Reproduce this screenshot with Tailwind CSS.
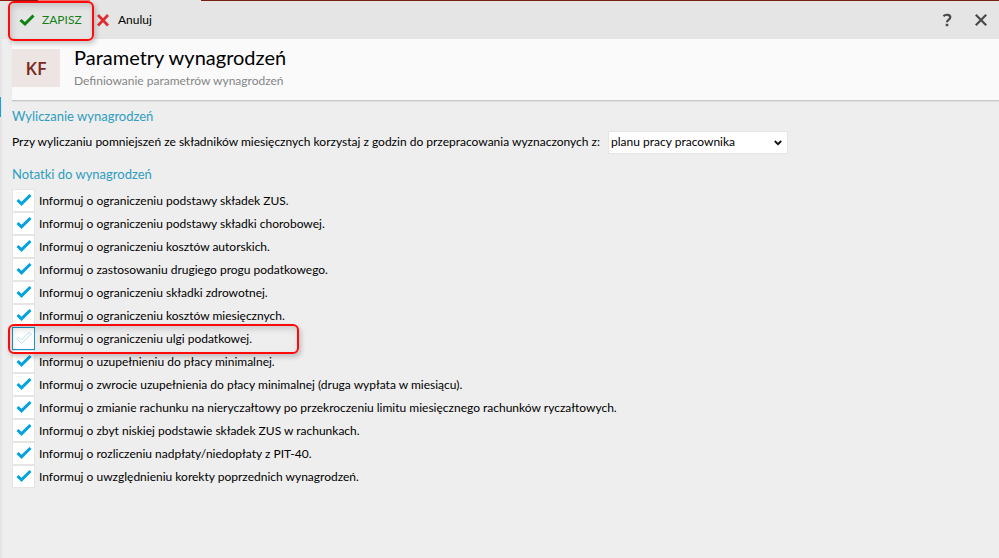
<!DOCTYPE html>
<html lang="pl">
<head>
<meta charset="utf-8">
<meta name="viewport" content="width=device-width, initial-scale=1">
<title>Parametry wynagrodzeń</title>
<script src="https://cdn.jsdelivr.net/npm/@tailwindcss/browser@4"></script>
</head>
<body class="relative flex min-h-screen flex-col bg-[#eeeeee] font-['Lato','Open_Sans','Noto_Sans',sans-serif] text-xs text-black">
  <div class="flex h-px"><div class="w-[38px] bg-[#8a1a0e]"></div><div class="w-[52px] bg-[#ee7a76]"></div><div class="w-[111px] bg-[#e5e5e5]"></div><div class="flex-1 bg-[#7a2013]"></div></div>

  <header class="flex h-[38px] items-center justify-between bg-[#e5e5e5] pr-3 pl-2">
    <div class="flex h-full items-center">
      <button type="button" class="relative flex h-full w-[86px] items-center gap-[7px] pl-[11px] text-[#158015]">
        <svg class="h-4 w-4" viewBox="0 0 16 16" fill="none" stroke="#0f820f" stroke-width="3" aria-hidden="true"><path d="M1.5 8 6 12 14.5 3.5"/></svg>
        ZAPISZ
        <span class="pointer-events-none absolute inset-x-0 top-0 -bottom-[2px] z-10 rounded-md border-2 border-[#ff0a0a] shadow-[2px_3px_5px_rgba(0,0,0,.2),inset_2px_3px_6px_rgba(0,0,0,.15)]"></span>
      </button>
      <button type="button" class="flex items-center gap-[7px] pl-px">
        <svg class="h-4 w-4" viewBox="0 0 16 16" fill="none" stroke="#de3034" stroke-width="2.8" aria-hidden="true"><path d="M3 3 13 13.5M13 3 3 13.5"/></svg>
        Anuluj
      </button>
    </div>
    <div class="flex items-center gap-5">
      <button type="button" aria-label="Pomoc"><svg class="h-4 w-4" viewBox="0 0 16 16" fill="none" stroke="#4a4a4a" stroke-width="2.2" aria-hidden="true"><path d="M4.5 4.2C6 2.3 11.3 2 11.3 5.2 11.3 7.7 8 7.4 8 10.3"/><path d="M8 11.8v2.4" stroke-width="2.6"/></svg></button>
      <button type="button" aria-label="Zamknij"><svg class="h-3 w-3" viewBox="0 0 12 12" fill="none" stroke="#4a4a4a" stroke-width="2.2" aria-hidden="true"><path d="M.8.8 11.2 11.2M11.2.8.8 11.2"/></svg></button>
    </div>
  </header>

  <main class="relative flex-1 border-l-2 border-[#e5e5e5] pl-[10px]">
    <div class="absolute top-[58px] -left-[2px] h-5 w-px bg-[#1ba1dc]"></div>
    <div class="flex h-[62px] gap-[14px] border-b border-[#c8c8c8] bg-[#fafafa] pt-[10px] shadow-[0_1px_1px_rgba(0,0,0,.06)]">
      <div class="flex h-[38px] w-12 items-center justify-center bg-[#ede5e4] font-['Open_Sans',sans-serif] text-lg font-semibold text-[#7a2a1c]">KF</div>
      <div>
        <h1 class="-mt-1 text-xl leading-6">Parametry wynagrodzeń</h1>
        <p class="mt-[3px] text-xs leading-[18px] text-[#858585]">Definiowanie parametrów wynagrodzeń</p>
      </div>
    </div>

    <section class="pt-[5px]">
      <h2 class="text-[13px] leading-5 text-[#2e9dbf]">Wyliczanie wynagrodzeń</h2>
      <div class="mt-1 flex h-6 items-center gap-2">
        <label for="basis" class="text-xs whitespace-nowrap">Przy wyliczaniu pomniejszeń ze składników miesięcznych korzystaj z godzin do przepracowania wyznaczonych z:</label>
        <div class="relative">
          <select id="basis" class="block h-[23px] w-[180px] appearance-none rounded-none border border-[#e5e5e5] bg-white pl-[2px] text-xs leading-5">
            <option>planu pracy pracownika</option>
          </select>
          <svg class="pointer-events-none absolute top-2 right-[6px] h-2 w-2" viewBox="0 0 8 8" fill="none" stroke="#111" stroke-width="1.8" aria-hidden="true"><path d="M.8 2 4 5.2 7.2 2"/></svg>
        </div>
      </div>
    </section>

    <section class="pt-[10px]">
      <h2 class="text-[13px] leading-5 text-[#2e9dbf]">Notatki do wynagrodzeń</h2>
      <ul id="notes" class="pt-[5px]"></ul>
    </section>
  </main>

  <template id="note">
    <li class="relative">
      <label class="flex h-[23px] w-fit items-center gap-[4px] text-xs whitespace-nowrap">
        <span class="relative block h-[23px] w-[23px]">
          <input type="checkbox" class="peer block h-[23px] w-[23px] appearance-none border border-[#e5e5e5] bg-white outline-none">
          <svg class="pointer-events-none absolute top-[3px] left-1 hidden h-4 w-4 peer-checked:block" viewBox="0 0 16 16" fill="none" stroke="#04a3df" stroke-width="3" aria-hidden="true"><path d="M1.5 8 5.5 11.8 14.5 3"/></svg>
          <svg class="pointer-events-none absolute top-[3px] left-1 h-4 w-4 peer-checked:hidden" viewBox="0 0 16 16" fill="none" stroke="#b5dcea" stroke-width=".9" aria-hidden="true"><path d="M.8 9 2.7 7.2 5.5 10 13.3 2.2 15.2 4 5.6 13.5Z"/></svg>
        </span>
        <span></span>
      </label>
    </li>
  </template>
  <template id="frame">
    <span class="pointer-events-none absolute -top-[3px] -left-1 h-[30px] w-[291px] rounded-md border-2 border-[#ff0a0a] shadow-[2px_3px_5px_rgba(0,0,0,.2),inset_2px_3px_6px_rgba(0,0,0,.15)]"></span>
  </template>
  <script>
    const notes = [
      ["Informuj o ograniczeniu podstawy składek ZUS.", true],
      ["Informuj o ograniczeniu podstawy składki chorobowej.", true],
      ["Informuj o ograniczeniu kosztów autorskich.", true],
      ["Informuj o zastosowaniu drugiego progu podatkowego.", true],
      ["Informuj o ograniczeniu składki zdrowotnej.", true],
      ["Informuj o ograniczeniu kosztów miesięcznych.", true],
      ["Informuj o ograniczeniu ulgi podatkowej.", false],
      ["Informuj o uzupełnieniu do płacy minimalnej.", true],
      ["Informuj o zwrocie uzupełnienia do płacy minimalnej (druga wypłata w miesiącu).", true],
      ["Informuj o zmianie rachunku na nieryczałtowy po przekroczeniu limitu miesięcznego rachunków ryczałtowych.", true],
      ["Informuj o zbyt niskiej podstawie składek ZUS w rachunkach.", true],
      ["Informuj o rozliczeniu nadpłaty/niedopłaty z PIT-40.", true],
      ["Informuj o uwzględnieniu korekty poprzednich wynagrodzeń.", true]
    ];
    const list = document.getElementById("notes");
    notes.forEach(([text, checked], i) => {
      const item = document.getElementById("note").content.cloneNode(true);
      const box = item.querySelector("input");
      box.id = "note-" + i;
      box.checked = checked;
      item.querySelector("label").htmlFor = box.id;
      item.querySelector("label > span:last-child").textContent = text;
      if (!checked) {
        box.classList.replace("border-[#e5e5e5]", "border-[#1b95c9]");
        item.querySelector("li").classList.add("z-10");
        item.querySelector("li").append(document.getElementById("frame").content.cloneNode(true));
      }
      list.append(item);
    });
  </script>
</body>
</html>
